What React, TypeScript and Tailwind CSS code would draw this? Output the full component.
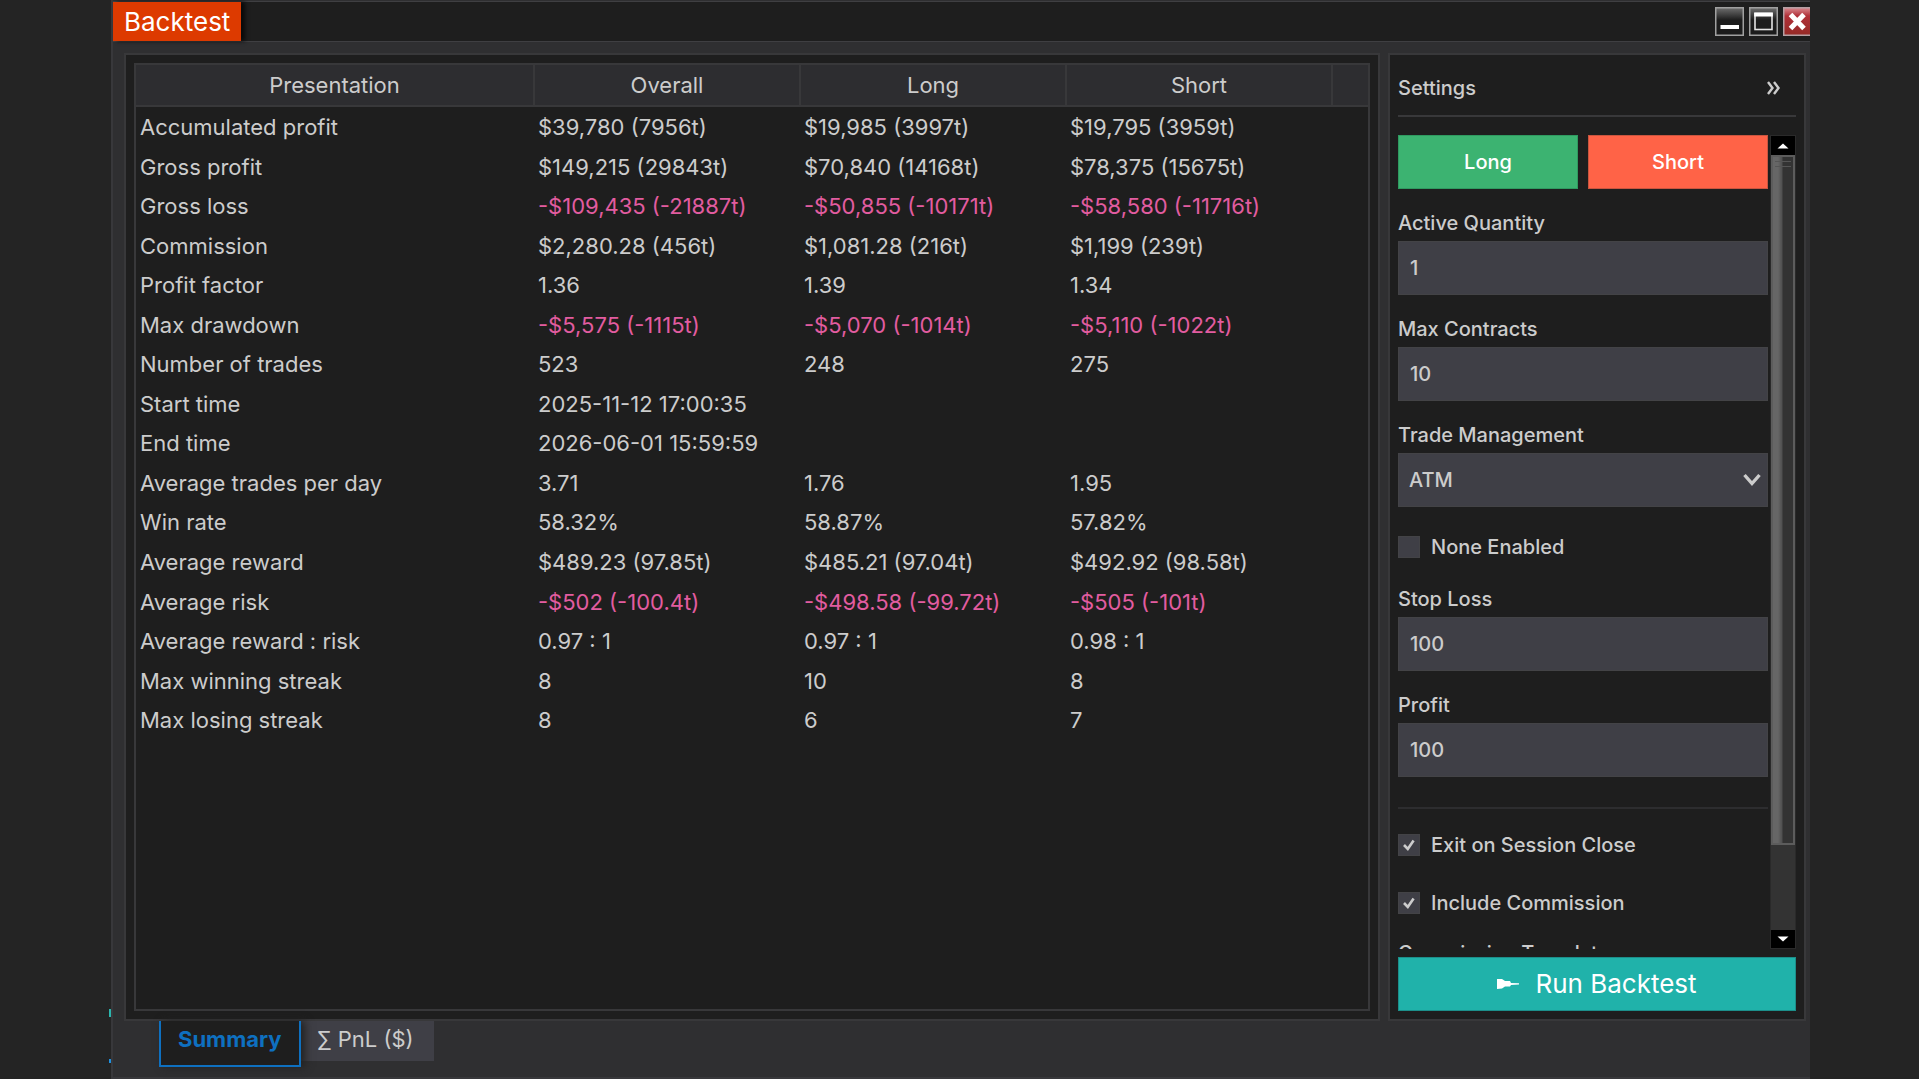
import { useState } from "react";

type Row = { label: string; values: string[] };

const columns = ["Presentation", "Overall", "Long", "Short"];

const rows: Row[] = [
  { label: "Accumulated profit", values: ["$39,780 (7956t)", "$19,985 (3997t)", "$19,795 (3959t)"] },
  { label: "Gross profit", values: ["$149,215 (29843t)", "$70,840 (14168t)", "$78,375 (15675t)"] },
  { label: "Gross loss", values: ["-$109,435 (-21887t)", "-$50,855 (-10171t)", "-$58,580 (-11716t)"] },
  { label: "Commission", values: ["$2,280.28 (456t)", "$1,081.28 (216t)", "$1,199 (239t)"] },
  { label: "Profit factor", values: ["1.36", "1.39", "1.34"] },
  { label: "Max drawdown", values: ["-$5,575 (-1115t)", "-$5,070 (-1014t)", "-$5,110 (-1022t)"] },
  { label: "Number of trades", values: ["523", "248", "275"] },
  { label: "Start time", values: ["2025-11-12 17:00:35", "", ""] },
  { label: "End time", values: ["2026-06-01 15:59:59", "", ""] },
  { label: "Average trades per day", values: ["3.71", "1.76", "1.95"] },
  { label: "Win rate", values: ["58.32%", "58.87%", "57.82%"] },
  { label: "Average reward", values: ["$489.23 (97.85t)", "$485.21 (97.04t)", "$492.92 (98.58t)"] },
  { label: "Average risk", values: ["-$502 (-100.4t)", "-$498.58 (-99.72t)", "-$505 (-101t)"] },
  { label: "Average reward : risk", values: ["0.97 : 1", "0.97 : 1", "0.98 : 1"] },
  { label: "Max winning streak", values: ["8", "10", "8"] },
  { label: "Max losing streak", values: ["8", "6", "7"] },
];

function Field({
  id,
  label,
  value,
  onChange,
}: {
  id: string;
  label: string;
  value: string;
  onChange: (value: string) => void;
}) {
  return (
    <div>
      <label htmlFor={id} className="block h-9 leading-9">
        {label}
      </label>
      <input
        id={id}
        type="text"
        value={value}
        onChange={(e) => onChange(e.target.value)}
        className="block w-full h-[54px] px-[11px] bg-[#3f3f46] border border-[#434346] outline-none"
      />
    </div>
  );
}

function CheckField({
  id,
  label,
  checked,
  onChange,
}: {
  id: string;
  label: string;
  checked: boolean;
  onChange: (checked: boolean) => void;
}) {
  return (
    <div className="flex items-center gap-[11px] h-6">
      <span className="relative flex size-[22px] shrink-0">
        <input
          id={id}
          type="checkbox"
          checked={checked}
          onChange={(e) => onChange(e.target.checked)}
          className="appearance-none size-full bg-[#3f3f46] border border-[#434346]"
        />
        {checked && (
          <svg
            viewBox="0 0 22 22"
            className="absolute inset-0 size-full pointer-events-none"
            fill="none"
            stroke="#cccccc"
            strokeWidth="2.6"
          >
            <path d="M6 11 L9.8 15 L15.6 6.5" />
          </svg>
        )}
      </span>
      <label htmlFor={id}>{label}</label>
    </div>
  );
}

function TitleBar() {
  return (
    <header className="flex h-[41px] shrink-0 justify-between border-y border-[#3f3f42] bg-[#1e1e1e]">
      <h1 className="flex items-center bg-[#dd3a00] px-[11px] text-[26px] text-white shadow-[4px_0_4px_#0a0a0a]">
        Backtest
      </h1>
      <div className="flex items-center gap-[5px]">
        <button type="button" aria-label="Minimize">
          <svg width="29" height="29" viewBox="0 0 29 29">
            <defs>
              <linearGradient id="chrome" x1="0" y1="0" x2="0" y2="1">
                <stop offset="0" stopColor="#6e6e6e" />
                <stop offset="0.45" stopColor="#1c1c1c" />
                <stop offset="1" stopColor="#1c1c1c" />
              </linearGradient>
            </defs>
            <rect x="0.75" y="0.75" width="27.5" height="27.5" fill="url(#chrome)" stroke="#a0a0a0" strokeWidth="1.5" />
            <rect x="5.5" y="18" width="18.5" height="4" fill="#fff" />
          </svg>
        </button>
        <button type="button" aria-label="Maximize">
          <svg width="29" height="29" viewBox="0 0 29 29">
            <rect x="0.75" y="0.75" width="27.5" height="27.5" fill="url(#chrome)" stroke="#a0a0a0" strokeWidth="1.5" />
            <rect x="6" y="6.5" width="17" height="16" fill="none" stroke="#e4e4e4" strokeWidth="1.6" />
            <rect x="5.2" y="5.5" width="18.6" height="4" fill="#fff" />
          </svg>
        </button>
        <button type="button" aria-label="Close">
          <svg width="27" height="29" viewBox="0 0 27 29">
            <defs>
              <linearGradient id="danger" x1="0" y1="0" x2="0" y2="1">
                <stop offset="0" stopColor="#d98a90" />
                <stop offset="0.3" stopColor="#b03038" />
                <stop offset="1" stopColor="#952a26" />
              </linearGradient>
            </defs>
            <path d="M27 0.75 H0.75 V28.25 H27" fill="url(#danger)" stroke="#b4a0a4" strokeWidth="1.5" />
            <path d="M7.5 7.5 L21 21.5 M21 7.5 L7.5 21.5" stroke="#fff" strokeWidth="5" />
          </svg>
        </button>
      </div>
    </header>
  );
}

function ResultsTable() {
  return (
    <section className="flex min-w-0 flex-1 border-2 border-[#38383a] bg-[#1e1e1e] p-2">
      <div className="w-full border-2 border-[#38383a]">
        <table className="h-[675px] w-full table-fixed border-collapse text-left text-[22px] leading-7">
          <colgroup>
            <col className="w-[398px]" />
            <col className="w-[266px]" />
            <col className="w-[266px]" />
            <col className="w-[266px]" />
            <col />
          </colgroup>
          <thead>
            <tr className="h-[41px] border-b-2 border-[#38383a] bg-[#2d2d30]">
              {columns.map((column) => (
                <th key={column} scope="col" className="border-r-2 border-[#38383a] p-0 text-center font-normal">
                  {column}
                </th>
              ))}
              <td />
            </tr>
          </thead>
          <tbody>
            {rows.map((row) => (
              <tr key={row.label}>
                <th scope="row" className="px-1 py-0 font-normal">
                  {row.label}
                </th>
                {row.values.map((value, i) => (
                  <td key={i} className={value.startsWith("-") ? "px-1 py-0 text-[#e25ca0]" : "px-1 py-0"}>
                    {value}
                  </td>
                ))}
                <td />
              </tr>
            ))}
          </tbody>
        </table>
      </div>
    </section>
  );
}

function ScrollBar() {
  return (
    <div className="flex w-[26px] shrink-0 flex-col border border-[#2a2a2a] bg-[#333333]">
      <button type="button" aria-label="Scroll up" className="flex h-[19px] items-center justify-center bg-black">
        <svg width="12" height="6" viewBox="0 0 12 6" fill="#fff">
          <path d="M0.5 5.5 L6 0.5 L11.5 5.5 Z" />
        </svg>
      </button>
      <div className="flex-1">
        <div className="flex h-[89%] flex-col items-center gap-1 border-2 border-[#5c5c5c] bg-linear-to-r from-[#666666] from-25% via-[#505050] via-45% to-[#333333] to-50% pt-1">
          <span className="h-px w-4 bg-[#555555]" />
          <span className="h-px w-4 bg-[#555555]" />
        </div>
      </div>
      <button type="button" aria-label="Scroll down" className="flex h-[18px] items-center justify-center bg-black">
        <svg width="12" height="6" viewBox="0 0 12 6" fill="#fff">
          <path d="M0.5 0.5 L6 5.5 L11.5 0.5 Z" />
        </svg>
      </button>
    </div>
  );
}

function SettingsPanel() {
  const [quantity, setQuantity] = useState("1");
  const [contracts, setContracts] = useState("10");
  const [management, setManagement] = useState("ATM");
  const [noneEnabled, setNoneEnabled] = useState(false);
  const [stopLoss, setStopLoss] = useState("100");
  const [profit, setProfit] = useState("100");
  const [exitOnClose, setExitOnClose] = useState(true);
  const [includeCommission, setIncludeCommission] = useState(true);
  const [template, setTemplate] = useState("");

  return (
    <aside className="flex w-[418px] shrink-0 flex-col border-2 border-[#38383a] bg-[#1e1e1e] p-2 text-xl leading-6 font-medium">
      <div className="flex h-[54px] shrink-0 items-center justify-between border-b-2 border-[#38383a] pb-[2px] pr-[14px]">
        <h2>Settings</h2>
        <button type="button" aria-label="Collapse settings">
          <svg width="16" height="16" viewBox="0 0 16 16" fill="none" stroke="currentColor" strokeWidth="2.4">
            <path d="M2 2 L6.5 8 L2 14 M8 2 L12.5 8 L8 14" />
          </svg>
        </button>
      </div>

      <div className="mt-[18px] flex min-h-0 flex-1">
        <form className="mr-[2px] min-w-0 flex-1 overflow-hidden">
          <div className="grid grid-cols-2 gap-[10px] text-white">
            <button type="button" className="h-[54px] border border-[#2f9a60] bg-[#3cb371]">
              Long
            </button>
            <button type="button" className="h-[54px] border border-[#c9553f] bg-[#ff6347]">
              Short
            </button>
          </div>
          <div className="mt-4 flex flex-col gap-4">
            <Field id="quantity" label="Active Quantity" value={quantity} onChange={setQuantity} />
            <Field id="contracts" label="Max Contracts" value={contracts} onChange={setContracts} />
            <div>
              <label htmlFor="management" className="block h-9 leading-9">
                Trade Management
              </label>
              <div className="relative">
                <select
                  id="management"
                  value={management}
                  onChange={(e) => setManagement(e.target.value)}
                  className="block h-[54px] w-full appearance-none border border-[#434346] bg-[#3f3f46] px-[10px] outline-none"
                >
                  <option>ATM</option>
                </select>
                <svg
                  width="18"
                  height="14"
                  viewBox="0 0 18 14"
                  className="pointer-events-none absolute right-[7px] top-5"
                  fill="none"
                  stroke="currentColor"
                  strokeWidth="3.4"
                >
                  <path d="M1.5 2 L9 10.5 L16.5 2" />
                </svg>
              </div>
            </div>
          </div>
          <div className="mt-7">
            <CheckField id="none-enabled" label="None Enabled" checked={noneEnabled} onChange={setNoneEnabled} />
          </div>
          <div className="mt-[22px] flex flex-col gap-4">
            <Field id="stop-loss" label="Stop Loss" value={stopLoss} onChange={setStopLoss} />
            <Field id="profit" label="Profit" value={profit} onChange={setProfit} />
          </div>
          <hr className="mb-6 mt-[30px] border-t-2 border-[#2d2d2f]" />
          <div className="flex flex-col gap-[34px]">
            <CheckField id="exit-close" label="Exit on Session Close" checked={exitOnClose} onChange={setExitOnClose} />
            <CheckField
              id="include-commission"
              label="Include Commission"
              checked={includeCommission}
              onChange={setIncludeCommission}
            />
          </div>
          <div className="mt-5">
            <Field id="template" label="Commission Template" value={template} onChange={setTemplate} />
          </div>
        </form>
        <ScrollBar />
      </div>

      <button
        type="button"
        className="mt-2 flex h-[54px] shrink-0 items-center justify-center gap-4 border border-[#1c8f8a] bg-[#20b2aa] text-[26px] font-normal text-white"
      >
        <svg width="22" height="12" viewBox="0 0 22 12" fill="#fff">
          <path d="M0 1 L5 1 L8 3 H13 L14 5 L22 5.2 V6.6 L14 7 L13 8.5 H8 L5 10.5 L0 11 Z" />
        </svg>
        Run Backtest
      </button>
    </aside>
  );
}

export default function App() {
  const [tab, setTab] = useState("summary");

  return (
    <div className="relative flex h-screen flex-col bg-[#242424] pl-[111px] pr-[109px] font-[Inter,sans-serif] text-[#cccccc]">
      <span className="absolute bottom-[62px] left-[109px] h-2 w-0.5 bg-[#2bb5ad]" />
      <span className="absolute bottom-4 left-[109px] h-1 w-0.5 bg-[#1e90e0]" />
      <div className="flex min-h-0 flex-1 flex-col border-b-2 border-l-2 border-[#38383b] bg-[#2f2f31] pt-px">
        <TitleBar />

        <main className="flex min-h-0 flex-1 gap-2 pl-[11px] pr-1 pt-[11px]">
          <ResultsTable />
          <SettingsPanel />
        </main>

        <nav className="flex h-14 shrink-0 items-start pl-[46px] text-[22px]">
          <button
            type="button"
            onClick={() => setTab("summary")}
            aria-pressed={tab === "summary"}
            className="z-10 h-[46px] border-2 border-t-0 border-[#0e70c0] bg-[#1e1e1e] px-[17px] pb-2 font-bold text-[#0e70c0] shadow-[4px_0_8px_#222222]"
          >
            Summary
          </button>
          <button
            type="button"
            onClick={() => setTab("pnl")}
            aria-pressed={tab === "pnl"}
            className="h-10 bg-[#3f3f46] pb-1 pl-[17px] pr-5"
          >
            ∑ PnL ($)
          </button>
        </nav>
      </div>
    </div>
  );
}
